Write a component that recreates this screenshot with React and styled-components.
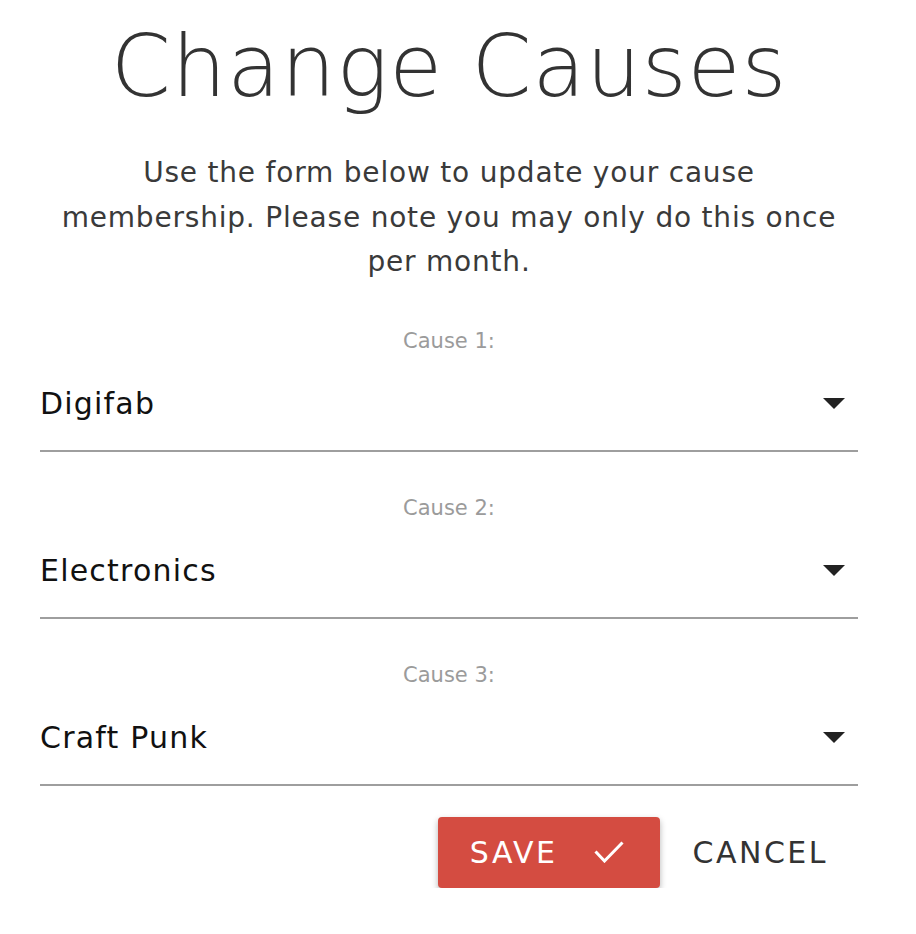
import styled, { createGlobalStyle } from 'styled-components';

const GlobalStyle = createGlobalStyle`
    body {
        margin: 0;
        background: #fff;
        font-family: "DejaVu Sans", "Open Sans", sans-serif;
    }
`;

const Page = styled.main`
    width: 818px;
    margin-left: 40px;
    display: flex;
    flex-direction: column;
    text-align: center;
`;

const Title = styled.h1`
    margin: 14px 0 0;
    font-size: 86px;
    font-weight: 300;
    line-height: 104px;
    color: #333;
    letter-spacing: 1px;
`;

const Intro = styled.p`
    margin: 33px 0 0;
    padding: 0 18px;
    font-size: 28px;
    line-height: 44.5px;
    letter-spacing: 0.8px;
    color: #3a3a3a;
`;

const Field = styled.div`
    display: flex;
    flex-direction: column;
    margin-top: 42px;
`;

const Label = styled.label`
    font-size: 21px;
    line-height: 28px;
    color: #9b9b9b;
`;

const Select = styled.div`
    display: flex;
    align-items: center;
    justify-content: space-between;
    height: 97px;
    padding-top: 3px;
    box-sizing: border-box;
    border-bottom: 2px solid #9e9e9e;
    font-size: 30px;
    letter-spacing: 1.2px;
    color: #111;
    text-align: left;
`;

const Caret = styled.span`
    width: 0;
    height: 0;
    margin-right: 13px;
    border-left: 11px solid transparent;
    border-right: 11px solid transparent;
    border-top: 11px solid #222;
`;

const Actions = styled.div`
    display: flex;
    justify-content: flex-end;
    align-items: center;
    gap: 32px;
    margin-top: 31px;
    padding-right: 30px;
`;

const SaveButton = styled.button`
    display: flex;
    align-items: center;
    gap: 37px;
    height: 71px;
    padding: 0 36px 0 32px;
    border: none;
    border-radius: 4px;
    background: #d44c41;
    color: #fff;
    font-family: inherit;
    font-size: 30px;
    letter-spacing: 2.5px;
    box-shadow: 0 3px 6px rgba(0, 0, 0, 0.3);
`;

const CancelButton = styled.button`
    border: none;
    background: none;
    padding: 0;
    color: #333;
    font-family: inherit;
    font-size: 30px;
    letter-spacing: 2.5px;
`;

const causes = ['Digifab', 'Electronics', 'Craft Punk'];

function CheckIcon() {
    return (
        <svg width="30" height="22" viewBox="0 0 30 22" fill="none">
            <path d="M1.5 10.5 L10.5 20 L28.5 1.5" stroke="#fff" strokeWidth="3" />
        </svg>
    );
}

export default function App() {
    return (
        <>
            <GlobalStyle />
            <Page>
                <Title>Change Causes</Title>
                <Intro>
                    Use the form below to update your cause membership. Please note you may only do this once per month.
                </Intro>
                {causes.map((cause, i) => (
                    <Field key={cause}>
                        <Label>Cause {i + 1}:</Label>
                        <Select>
                            <span>{cause}</span>
                            <Caret />
                        </Select>
                    </Field>
                ))}
                <Actions>
                    <SaveButton>
                        SAVE
                        <CheckIcon />
                    </SaveButton>
                    <CancelButton>CANCEL</CancelButton>
                </Actions>
            </Page>
        </>
    );
}
